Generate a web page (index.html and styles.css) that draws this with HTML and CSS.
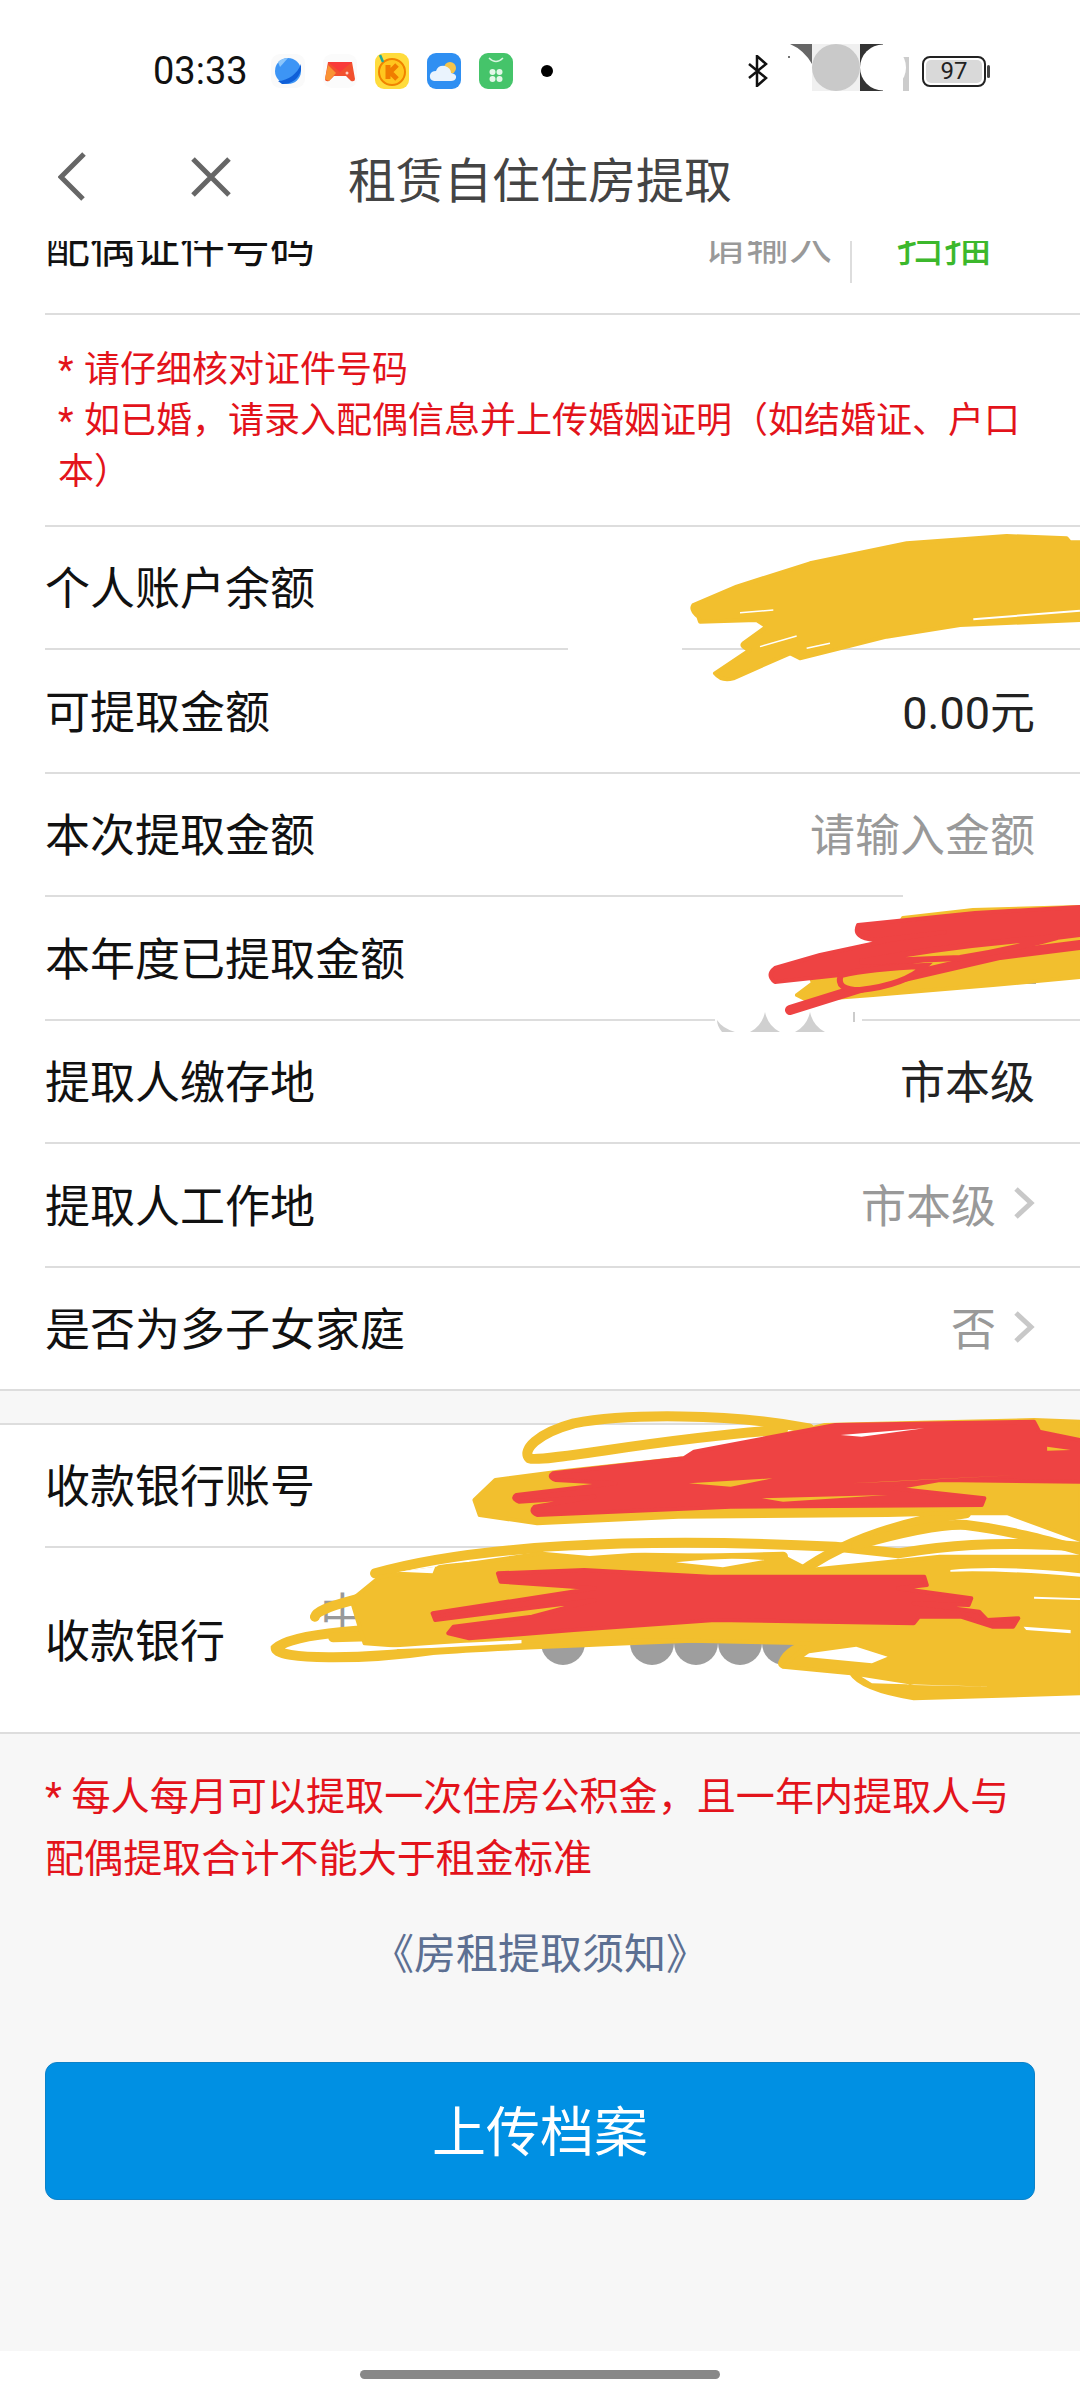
FILE: index.html
```html
<!DOCTYPE html>
<html lang="zh-CN">
<head>
    <meta charset="UTF-8">
    <title>租赁自住住房提取</title>
    <link rel="stylesheet" href="styles.css">
</head>
<body>
<div class="page">
    <div class="status">
        <div class="status-left">
            <span class="time">03:33</span>
            <svg class="app" viewBox="0 0 36 36"><rect x="1" y="1" width="34" height="34" rx="9" fill="#fafafa"/><circle cx="18" cy="18" r="13" fill="#3d95f5"/><path d="M8 28C18 28 28 20 31 11L31 17C29 26 20 32 12 31Z" fill="#0f5fd8"/><path d="M8 9C11 6 15 5 18 5L10 14Z" fill="#8cc6fb"/></svg>
            <svg class="app" viewBox="0 0 36 36"><rect x="1" y="1" width="34" height="34" rx="9" fill="#fbfbfb"/><path d="M6 9H30L33 26Q33 29 29 28L24 23H12L7 28Q3 29 3 26Z" fill="#f2502e"/><path d="M6 9H30L18 19Z" fill="#f93a3a"/><path d="M3 26L6 12L14 20L7 28Z" fill="#f99334"/><circle cx="25" cy="20" r="1.5" fill="#ffd0c0"/></svg>
            <svg class="app" viewBox="0 0 36 36"><rect x="1" y="0" width="34" height="36" rx="9" fill="#ffdc3d"/><circle cx="18" cy="19" r="13" fill="#ffc61e" stroke="#f08300" stroke-width="2"/><path d="M14 12V26M23 12L16 19L23 26" fill="none" stroke="#f07d00" stroke-width="5"/><path d="M6 2L9 9" stroke="#21a79c" stroke-width="2.5"/></svg>
            <svg class="app" viewBox="0 0 36 36"><rect x="1" y="0" width="34" height="36" rx="9" fill="#2f8ff2"/><circle cx="24" cy="15" r="6" fill="#f6c44a"/><path d="M8 28Q3 27 4 22Q5 18 10 18Q12 12 19 13Q25 15 25 20Q31 21 30 25Q29 28 25 28Z" fill="#eaf3fd"/></svg>
            <svg class="app" viewBox="0 0 36 36"><rect x="1" y="0" width="34" height="36" rx="9" fill="#45c46a"/><path d="M11 5Q18 12 25 5" fill="none" stroke="#d9f5e1" stroke-width="1.5"/><g fill="#e3f7e8"><circle cx="14.5" cy="19" r="3"/><circle cx="21.5" cy="19" r="3"/><circle cx="14.5" cy="26" r="3"/><circle cx="21.5" cy="26" r="3"/></g></svg>
            <span class="dot"></span>
        </div>
        <div class="status-right">
            <svg class="bt" viewBox="0 0 21 32"><path d="M2 9L19 23L10 31V1L19 9L2 23" fill="none" stroke="#111" stroke-width="2.5"/></svg>
            <svg class="smudge" viewBox="0 0 120 47"><rect x="22" width="48" height="47" fill="#f0f0f0"/><path d="M0 0H22V20Q14 6 0 0Z" fill="#666"/><rect x="70" width="23" height="47" fill="#333"/><rect x="113" y="13" width="6" height="34" fill="#ccc"/><ellipse cx="46" cy="23.5" rx="24" ry="23.5" fill="#c9c9c9"/><ellipse cx="93" cy="23.5" rx="23" ry="23" fill="#fff"/><circle cx="-1" cy="13" r="1" fill="#444"/></svg>
            <div class="battery"><span class="battery-in">97</span></div>
        </div>
    </div>

    <div class="nav">
        <div class="nav-icons">
            <svg class="nav-back" viewBox="0 0 28 50"><path d="M26 2L3 25L25 47" fill="none" stroke="#666" stroke-width="5"/></svg>
            <svg class="nav-close" viewBox="0 0 40 40"><path d="M2 2L38 38M38 2L2 38" fill="none" stroke="#666" stroke-width="5"/></svg>
        </div>
        <div class="nav-title">租赁自住住房提取</div>
    </div>

    <div class="row row-cut">
        <span class="label">配偶证件号码</span>
        <div class="input-wrap">
            <span class="hint">请输入</span>
            <span class="scan">扫描</span>
        </div>
    </div>

    <div class="notes">
        <div>* 请仔细核对证件号码</div>
        <div>* 如已婚，请录入配偶信息并上传婚姻证明（如结婚证、户口本）</div>
    </div>

    <div class="row"><span class="label">个人账户余额</span></div>
    <div class="row"><span class="label">可提取金额</span><span class="value">0.00元</span></div>
    <div class="row"><span class="label">本次提取金额</span><span class="hint">请输入金额</span></div>
    <div class="row"><span class="label">本年度已提取金额</span></div>
    <div class="row"><span class="label">提取人缴存地</span><span class="value">市本级</span></div>
    <div class="row">
        <span class="label">提取人工作地</span>
        <span class="hint">市本级</span>
        <svg class="arrow" viewBox="0 0 22 34"><path d="M3 3L18 17L3 31" fill="none" stroke="#c8c8c8" stroke-width="5"/></svg>
    </div>
    <div class="row row-end">
        <span class="label">是否为多子女家庭</span>
        <span class="hint">否</span>
        <svg class="arrow" viewBox="0 0 22 34"><path d="M3 3L18 17L3 31" fill="none" stroke="#c8c8c8" stroke-width="5"/></svg>
    </div>

    <div class="gap"></div>

    <div class="row"><span class="label">收款银行账号</span></div>
    <div class="row row-tall">
        <span class="label">收款银行</span>
        <span class="bank hint">中国</span>
    </div>

    <div class="foot">
        <div class="foot-note">* 每人每月可以提取一次住房公积金，且一年内提取人与配偶提取合计不能大于租金标准</div>
        <div class="foot-link">《房租提取须知》</div>
        <div class="btn">上传档案</div>
    </div>

    <div class="home"><span class="home-bar"></span></div>

    <!-- 涂抹遮挡层 -->
    <svg class="scribble" viewBox="0 0 1080 2400">
        <!-- 擦除的白块和灰色残留 -->
        <g>
            <rect x="568" y="645" width="114" height="8" fill="#fff"/>
            <rect x="903" y="893" width="177" height="8" fill="#fff"/>
            <rect x="715" y="1016" width="147" height="17" fill="#fff"/>
            <path d="M717 1020Q722 1028 735 1032H722Q717 1026 717 1020ZM765 1012Q762 1026 750 1032H780Q768 1026 765 1012ZM810 1012Q807 1026 795 1032H825Q813 1026 810 1012Z" fill="#d0d0d0"/>
            <rect x="853" y="1012" width="2" height="10" fill="#ccc"/>
            <rect x="1020" y="976" width="16" height="8" fill="#aaa"/>
        </g>

        <!-- 个人账户余额 -->
        <g transform="translate(640 510) scale(.3333)">
            <path class="ink-y" vector-effect="non-scaling-stroke" d="M160 285L290 230L510 160L800 100L1100 78L1280 85L1290 97L1320 97V330L960 345L740 380L600 415L480 445L450 430L280 505Q245 515 225 490L330 420Q300 410 310 400L380 350L350 330L180 335L175 320Q150 300 160 285Z"/>
            <path d="M1000 328L1320 302" stroke="#fff" stroke-width="2" fill="none" vector-effect="non-scaling-stroke"/>
            <path d="M300 308L400 300M500 415L570 400M360 410L470 378" stroke="#fff" stroke-width="1.5" fill="none" vector-effect="non-scaling-stroke"/>
        </g>

        <!-- 本年度已提取金额 -->
        <g>
            <path class="ink-y" d="M903 918L973 910L1080 907V977L993 985L873 995L807 1000L797 995L813 983L810 975L893 937Z"/>
            <path class="ink-r" d="M858 925L975 913L1080 907V935L1000 945L940 957L840 975L775 982Q766 975 775 968L820 955L890 940L945 932L875 940Q852 938 858 925Z"/>
            <path d="M790 1010L870 985L1000 955L1080 945" fill="none" stroke="#ee4343" stroke-width="10" stroke-linecap="round"/>
            <path d="M860 962Q950 945 1057 937Q1010 950 960 958Z" fill="#f2bf2e" stroke="#ee4343" stroke-width="6"/>
            <path d="M925 966Q870 968 841 975Q835 990 860 990Q905 985 925 966Z" fill="#f2bf2e" stroke="#ee4343" stroke-width="6"/>
        </g>

        <!-- 收款银行的圆点 -->
        <g fill="#9e9e9e">
            <ellipse cx="563" cy="1643" rx="22" ry="22"/>
            <ellipse cx="652" cy="1643" rx="22" ry="22"/>
            <ellipse cx="696" cy="1643" rx="22" ry="22"/>
            <ellipse cx="740" cy="1643" rx="22" ry="22"/>
            <ellipse cx="784" cy="1643" rx="22" ry="22"/>
        </g>

        <!-- 收款银行账号和收款银行 -->
        <g transform="translate(260 1400) scale(.523 .3333)">
            <g fill="none" stroke="#f2bf2e" stroke-width="10" stroke-linecap="round">
                <path vector-effect="non-scaling-stroke" d="M1050 85C900 40 700 40 600 70C530 100 500 150 515 175C540 190 780 110 1000 90"/>
                <path vector-effect="non-scaling-stroke" d="M220 520C400 440 700 410 1100 440L1220 460"/>
                <path vector-effect="non-scaling-stroke" d="M1000 470C800 480 500 480 345 510"/>
                <path vector-effect="non-scaling-stroke" d="M340 545C200 590 110 620 105 650"/>
                <path vector-effect="non-scaling-stroke" d="M450 680C200 680 60 700 30 745C30 780 200 780 330 750C500 730 800 715 1050 700"/>
                <path vector-effect="non-scaling-stroke" d="M140 712L420 700"/>
                <path vector-effect="non-scaling-stroke" d="M1030 520C1100 440 1200 370 1350 340"/>
                <path vector-effect="non-scaling-stroke" d="M1140 435C1220 400 1300 370 1350 375C1430 390 1500 420 1568 450"/>
                <path vector-effect="non-scaling-stroke" d="M1220 460C1300 440 1400 420 1568 440"/>
                <path vector-effect="non-scaling-stroke" d="M1000 790C1010 750 1040 735 1070 730"/>
            </g>
            <path class="ink-y" vector-effect="non-scaling-stroke" d="M410 300L450 240L570 215L810 175L1080 75L1480 60L1568 65V420L1430 340L1330 340L1200 345L800 350L530 370L420 345Z"/>
            <path class="ink-y" vector-effect="non-scaling-stroke" d="M175 600L230 530L540 460L1000 470L1050 510L1300 470L1568 470V880L1250 895Q1150 870 1130 820L1000 800L1050 730L750 720L330 745L200 730Z"/>
            <g fill="#fff">
                <path d="M540 455Q640 445 745 455L630 468Z"/>
                <path d="M795 487Q880 470 965 480L885 502Z"/>
                <path d="M265 515L335 500L330 520Z"/>
                <path d="M200 750Q300 735 500 720L500 730Q350 745 200 750Z"/>
                <path d="M1320 510Q1420 495 1568 520V530Q1420 510 1320 515Z"/>
                <path d="M1480 590L1568 595V600L1480 596Z"/>
                <path d="M1460 680L1550 690V700L1465 690Z"/>
                <path d="M1050 760L1140 740L1200 770L1170 790L1040 770Z"/>
                <path d="M1150 830L1170 850L1400 860L1250 855Z"/>
            </g>
            <path class="ink-r" vector-effect="non-scaling-stroke" d="M1480 65L1490 95L1568 120V245L1300 240L1210 265L1385 295L1380 315L900 320L530 345Q515 335 525 320L640 290L495 305Q480 295 490 285L680 250L565 240Q550 230 560 220L810 175L830 155L1100 75Z"/>
            <path d="M820 250L980 235L900 260Z" fill="#f2bf2e"/>
            <path d="M1130 250L1450 225L1200 245Z" fill="#f2bf2e"/>
            <path d="M960 295L1200 285L1000 305Z" fill="#f2bf2e"/>
            <path d="M1505 140L1550 150L1505 152Z" fill="#f2bf2e"/>
            <path d="M1110 105L1270 85L1150 110Z" fill="#fff"/>
            <path class="ink-r" vector-effect="non-scaling-stroke" d="M455 520L620 510L860 530L1270 530L1275 555L1220 565L1360 595L1355 615L1250 610L1375 635L1390 660L1450 655L1440 680L1400 680L1340 650L1260 650L1250 670L870 660L600 690L400 715L360 700L370 680L520 650L640 600L335 660L330 640L640 565L460 545Z"/>
        </g>
    </svg>
</div>
</body>
</html>
```

FILE: styles.css
```css
html,body{
    margin:0; padding:0; height:100%;
}
body{
    font-family:Roboto,"Noto Sans CJK SC",sans-serif; color:#111; background:#fff;
}
.page{
    width:1080px; height:2400px; position:relative; overflow:hidden; display:flex; flex-direction:column;
}

/* 状态栏 */
.status{
    height:120px; box-sizing:border-box; padding:22px 94px 0 153px;
    display:flex; align-items:center; justify-content:space-between;
}
.status-left{
    display:flex; align-items:center; gap:16px;
}
.time{
    font-size:38px; color:#111; margin-right:8px; width:93px; white-space:nowrap;
}
.app{
    width:36px; height:36px; display:block;
}
.dot{
    width:12px; height:12px; border-radius:50%; background:#000; margin-left:11px;
}
.status-right{
    display:flex; align-items:center;
}
.bt{
    width:21px; height:32px; margin-right:22px;
}
.smudge{
    width:120px; height:47px; margin:-7px 12px 0 0; overflow:visible;
}
.battery{
    width:64px; height:31px; box-sizing:border-box; border:2.5px solid #222; border-radius:8px;
    padding:2px; position:relative;
}
.battery:after{
    content:""; position:absolute; right:-6px; top:7px; width:3px; height:13px; background:#444; border-radius:2px;
}
.battery-in{
    display:block; height:100%; background:#d9d9d9; border-radius:5px;
    font-size:24px; line-height:22px; text-align:center; color:#222;
}

/* 导航 */
.nav{
    height:121px; display:grid; grid-template-columns:1fr auto 1fr; align-items:center;
    box-sizing:border-box; padding:0 0 8px 58px;
}
.nav-icons{
    display:flex; align-items:center; gap:105px;
}
.nav-back{
    width:28px; height:50px;
}
.nav-close{
    width:40px; height:40px;
}
.nav-title{
    font-size:48px; color:#444; white-space:nowrap; padding-right:58px;
}

/* 表单行 */
.row{
    height:123.5px; box-sizing:border-box; margin-left:45px; padding:0 45px 3px 0;
    border-bottom:2px solid #ddd; background:#fff;
    display:flex; align-items:center; font-size:45px;
}
.label{
    white-space:nowrap; margin-right:auto;
}
.value{
    color:#222;
}
.hint{
    color:#999;
}
.arrow{
    width:22px; height:34px; margin-left:17px;
}
.row-cut{
    height:74px; padding:0 88px 0 0; overflow:hidden; align-items:flex-start;
}
.row-cut .label{
    margin-top:-30px;
}
.input-wrap{
    display:flex; align-items:flex-start;
}
.input-wrap .hint{
    margin:-31px 18px 0 0; font-size:43px;
}
.scan{
    color:#3cb82c; font-size:48px; margin-top:-25px; border-left:2px solid #ddd; padding-left:44px;
    height:67px; line-height:58px; white-space:nowrap;
}
.notes{
    margin-left:45px; box-sizing:border-box; height:211.5px; padding:30px 45px 0 13px;
    border-bottom:2px solid #ddd; color:#e3131b; font-size:36px; line-height:51px; word-spacing:1.5px;
}
.row-end{
    margin-left:0; padding-left:45px;
}
.gap{
    height:31.5px; background:#f7f7f7; border-bottom:2px solid #ddd; flex:none;
}
.row-tall{
    height:186px; margin-left:0; padding-left:45px; position:relative;
}
.row-tall .label{
    margin-right:95px;
}
.bank{
    align-self:flex-start; margin-top:31px;
}

/* 底部 */
.foot{
    flex:1; background:#f7f7f7; padding:32px 45px 0;
}
.foot-note{
    color:#e3131b; font-size:39.1px; line-height:62px;
}
.foot-link{
    color:#5c6f92; font-size:42px; text-align:center; margin-top:33.5px; line-height:62px;
}
.btn{
    height:138px; margin-top:76px; box-sizing:border-box; background:#0090e3; border:1px solid #0c82c9; border-radius:12px;
    color:#fff; font-size:54px; text-align:center; line-height:141px;
}
.home{
    height:49px; background:#fff; display:flex; justify-content:center; align-items:flex-start;
}
.home-bar{
    width:360px; height:9px; background:#888; border-radius:5px; margin-top:19px;
}

/* 涂抹层盖在内容上 */
.scribble{
    position:absolute; left:0; top:0; width:1080px; height:2400px;
}
.ink-y{
    fill:#f2bf2e; stroke:#f2bf2e; stroke-width:4px; stroke-linejoin:round;
}
.ink-r{
    fill:#ee4343; stroke:#ee4343; stroke-width:4px; stroke-linejoin:round;
}
```
